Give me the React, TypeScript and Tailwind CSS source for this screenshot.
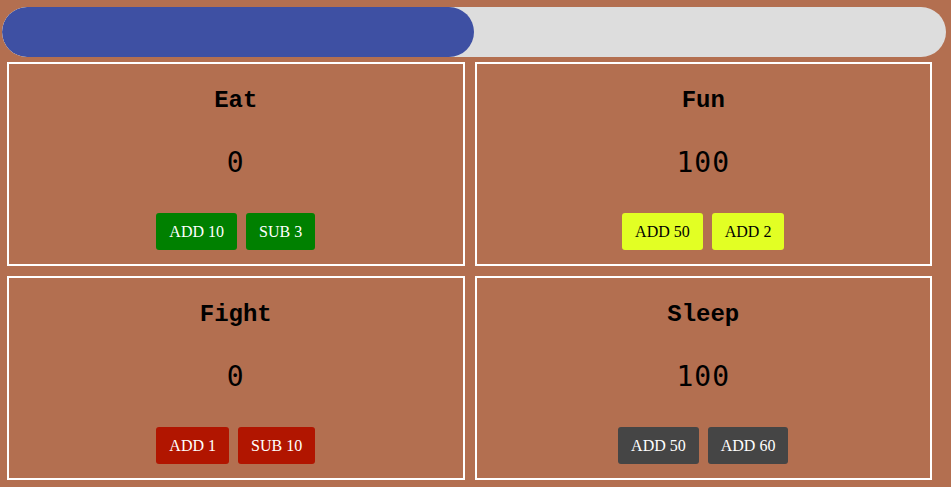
import React, { useState } from 'react';

type Stat = {
  title: string;
  value: number;
  btnClass: string;
  actions: { label: string; delta: number }[];
};

const initial: Stat[] = [
  {
    title: 'Eat',
    value: 0,
    btnClass: 'bg-[#008000] text-white',
    actions: [
      { label: 'ADD 10', delta: 10 },
      { label: 'SUB 3', delta: -3 },
    ],
  },
  {
    title: 'Fun',
    value: 100,
    btnClass: 'bg-[#e2ff24] text-black',
    actions: [
      { label: 'ADD 50', delta: 50 },
      { label: 'ADD 2', delta: 2 },
    ],
  },
  {
    title: 'Fight',
    value: 0,
    btnClass: 'bg-[#b11500] text-white',
    actions: [
      { label: 'ADD 1', delta: 1 },
      { label: 'SUB 10', delta: -10 },
    ],
  },
  {
    title: 'Sleep',
    value: 100,
    btnClass: 'bg-[#454545] text-white',
    actions: [
      { label: 'ADD 50', delta: 50 },
      { label: 'ADD 60', delta: 60 },
    ],
  },
];

export default function App() {
  const [stats, setStats] = useState(initial);

  const clamp = (n: number) => Math.max(0, Math.min(100, n));
  const total = stats.reduce((s, x) => s + x.value, 0);
  const pct = Math.round((total / (stats.length * 100)) * 100);

  const update = (i: number, delta: number) => {
    setStats((prev) => prev.map((s, j) => (j === i ? { ...s, value: clamp(s.value + delta) } : s)));
  };

  return (
    <div className="min-h-screen w-full bg-[#b36f50] pt-[7px]">
      {/* progress bar */}
      <div className="ml-[2px] w-[944px] h-[50px] rounded-full bg-[#dddddd] overflow-hidden">
        <div className="h-full rounded-full bg-[#3e50a3]" style={{ width: `${pct}%` }} />
      </div>

      {/* stat cards */}
      <div className="ml-[7px] mt-[5px] w-[925px] grid grid-cols-2 gap-[10px]">
        {stats.map((s, i) => (
          <div key={s.title} className="h-[204px] border-2 border-white flex flex-col items-center pt-[23px]">
            <h2 className="h-[28px] leading-[28px] text-[24px] font-bold text-black font-['Liberation_Mono',monospace]">
              {s.title}
            </h2>
            <div className="mt-[32px] h-[32px] leading-[32px] text-[28px] tracking-[1px] text-black font-['DejaVu_Sans_Mono',monospace]">
              {s.value}
            </div>
            <div className="mt-[34px] flex gap-[9px]">
              {s.actions.map((a) => (
                <button
                  key={a.label}
                  type="button"
                  onClick={() => update(i, a.delta)}
                  className={`h-[37px] px-[13px] rounded-[3px] text-[16px] font-['Liberation_Serif',serif] ${s.btnClass}`}
                >
                  {a.label}
                </button>
              ))}
            </div>
          </div>
        ))}
      </div>
    </div>
  );
}
